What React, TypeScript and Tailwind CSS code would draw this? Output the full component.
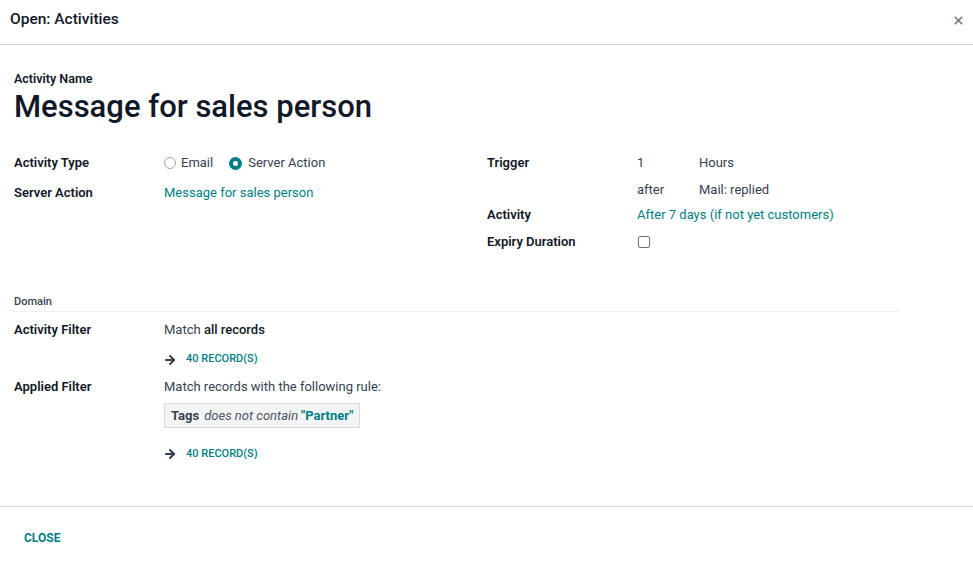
import { ArrowRight, X } from 'lucide-react';

function Row({ label, children, h = 'h-[30px]' }: { label: string; children: React.ReactNode; h?: string }) {
  return (
    <div className={`flex items-center ${h}`}>
      <div className="w-[150px] shrink-0 text-[13px] font-semibold text-[#111827]">{label}</div>
      <div className="flex items-center text-[13px] text-[#374151]">{children}</div>
    </div>
  );
}

function RecordsLink() {
  return (
    <div className="flex items-center gap-[9px] text-[11px] font-medium text-[#017e84]">
      <ArrowRight size={14} strokeWidth={3.5} className="text-[#374151] -ml-[1px]" />
      <span>40 RECORD(S)</span>
    </div>
  );
}

export default function App() {
  return (
    <div className="w-[973px] h-[563px] bg-white flex flex-col font-['Roboto',sans-serif] text-[#374151]">
      {/* header */}
      <div className="h-[45px] shrink-0 flex items-center justify-between pl-[10px] pr-[8px] pb-[4px] border-b border-[#d1d5db]">
        <h4 className="text-[15.5px] font-medium text-[#111827]">Open: Activities</h4>
        <X size={13} strokeWidth={3} className="text-[#6b7280]" />
      </div>

      {/* body */}
      <div className="flex-1 pl-[14px] pt-[27px]">
        <div className="text-[12.5px] font-semibold text-[#111827] leading-[14px]">Activity Name</div>
        <h1 className="text-[31px] font-medium text-[#111827] leading-[40px] mt-[1px]">Message for sales person</h1>

        <div className="flex mt-[21px]">
          <div className="w-[473px]">
            <Row label="Activity Type">
              <label className="flex items-center gap-[5px] mr-[16px]">
                <span className="w-[12px] h-[12px] rounded-full border border-[#9ca3af] bg-white" />
                Email
              </label>
              <label className="flex items-center gap-[6px]">
                <span className="w-[13px] h-[13px] rounded-full bg-[#017e84] flex items-center justify-center">
                  <span className="w-[5px] h-[5px] rounded-full bg-white" />
                </span>
                Server Action
              </label>
            </Row>
            <Row label="Server Action">
              <span className="text-[#017e84]">Message for sales person</span>
            </Row>
          </div>
          <div className="flex-1 pt-[1px]">
            <Row label="Trigger" h="h-[27px]">
              <span className="w-[62px]">1</span>
              <span>Hours</span>
            </Row>
            <Row label="" h="h-[27px]">
              <span className="w-[62px]">after</span>
              <span>Mail: replied</span>
            </Row>
            <Row label="Activity" h="h-[24px]">
              <span className="text-[#017e84]">After 7 days (if not yet customers)</span>
            </Row>
            <Row label="Expiry Duration" h="h-[29px]">
              <span className="w-[12px] h-[12px] border border-[#6b7280] rounded-[2px] ml-[1px]" />
            </Row>
          </div>
        </div>

        {/* domain */}
        <div className="w-[886px] mt-[38px] border-b border-[#eef0f3]">
          <div className="text-[11px] font-medium text-[#374151]">Domain</div>
        </div>
        <div className="mt-[3px]">
          <Row label="Activity Filter">
            <span>
              Match <span className="font-medium text-[#111827]">all records</span>
            </span>
          </Row>
          <div className="pl-[150px] h-[28px] pt-[2px] flex items-center">
            <RecordsLink />
          </div>
          <Row label="Applied Filter" h="h-[29px]">
            Match records with the following rule:
          </Row>
          <div className="pl-[150px] mt-[1px]">
            <div className="inline-flex items-center h-[25px] px-[6px] gap-[5px] border border-[#d8dadd] bg-[#f3f4f6] text-[13px]">
              <span className="font-bold text-[#374151]">Tags</span>
              <span className="italic text-[#4b5563]">does not contain</span>
              <span className="font-bold text-[#017e84] -ml-[2px]">"Partner"</span>
            </div>
          </div>
          <div className="pl-[150px] h-[26px] mt-[13px] flex items-center">
            <RecordsLink />
          </div>
        </div>
      </div>

      {/* footer */}
      <div className="h-[57px] shrink-0 border-t border-[#d1d5db] flex items-center pl-[24px]">
        <button className="text-[12px] font-bold text-[#017e84] uppercase mt-[5px]">Close</button>
      </div>
    </div>
  );
}
